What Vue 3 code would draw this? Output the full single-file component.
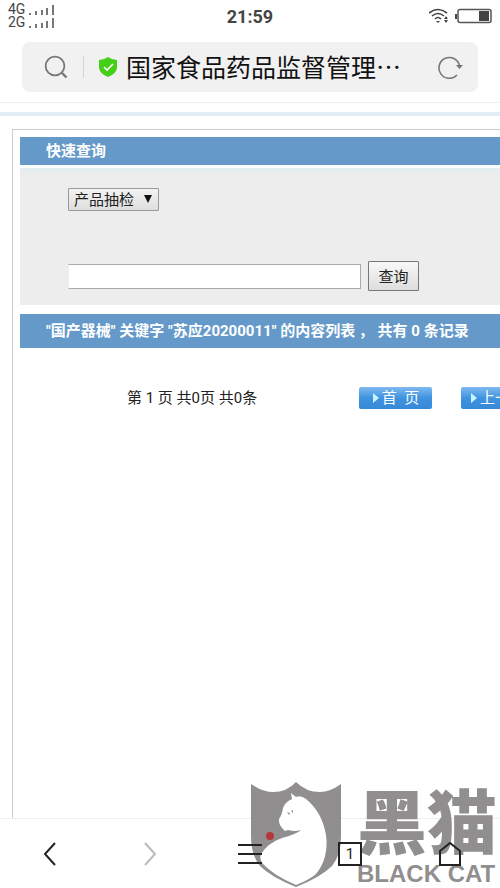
<template>
  <div class="screen">
    <header class="status-bar">
      <div class="signals">
        <div v-for="net in networks" :key="net" class="signal">
          <span>{{ net }}</span>
          <svg width="26" height="12" viewBox="0 0 26 12">
            <path d="M2 9v2M8 7v4M14 6v5M19 4v7M25 1v10" stroke="#555" stroke-width="1.6" />
          </svg>
        </div>
      </div>
      <time class="clock">21:59</time>
      <div class="device">
        <svg width="20" height="16" viewBox="0 0 20 16" fill="none" stroke="#444" stroke-width="1.6">
          <path d="M0 5Q9-2 18 5M3 8Q9 3 15 8M6 11Q9 8 12 11" />
          <path d="M7 13h4l-2 2zM15 11l2-3 2 3zM15 12l2 3 2-3z" fill="#444" stroke="none" />
        </svg>
        <svg width="37" height="16" viewBox="0 0 37 16">
          <path d="M1 6v5" stroke="#444" stroke-width="2" />
          <rect x="3" y="1.5" width="33" height="13" rx="2" fill="#fff" stroke="#555" stroke-width="1.5" />
          <rect x="24" y="3" width="10" height="10" fill="#444" />
        </svg>
      </div>
    </header>

    <div class="address-bar">
      <svg class="search-icon" width="24" height="24" viewBox="0 0 24 24" fill="none" stroke="#777" stroke-width="1.8">
        <circle cx="11" cy="11" r="9.4" />
        <path d="M17.5 17.5l5 5" stroke-width="2.4" />
      </svg>
      <span class="divider"></span>
      <svg class="shield-icon" width="20" height="22" viewBox="0 0 20 22">
        <path d="M10 1Q14 4 19 4V12Q18 18 10 21Q2 18 1 12V4Q6 4 10 1Z" fill="#45cf17" />
        <path d="M6 11l3 3 6-6" fill="none" stroke="#fff" stroke-width="1.6" />
      </svg>
      <span class="site-title">国家食品药品监督管理…</span>
      <button class="icon-button" aria-label="刷新">
        <svg width="26" height="24" viewBox="0 0 26 24" fill="none" stroke="#777" stroke-width="1.6">
          <path d="M20 20A10.4 10.4 0 1 1 22.6 11" />
          <path d="M19 10h7l-3.500 4z" fill="#777" stroke="none" />
        </svg>
      </button>
    </div>
    <div class="band"></div>

    <main class="page">
      <h2 class="bar">快速查询</h2>
      <form class="query" @submit.prevent>
        <label class="select-wrap">
          <select v-model="category" aria-label="查询类别">
            <option>产品抽检</option>
          </select>
          <span class="arrow"></span>
        </label>
        <div class="query-row">
          <input v-model="keyword" type="text" aria-label="关键字" />
          <button type="submit" class="query-button">查询</button>
        </div>
      </form>
      <h2 class="bar result-bar">"国产器械" 关键字 "苏应20200011" 的内容列表 ， 共有 0 条记录</h2>
      <nav class="pager">
        <span class="summary">第 1 页 共0页 共0条</span>
        <button v-for="name in pagerButtons" :key="name" class="pager-button">
          <svg width="8" height="10" viewBox="0 0 8 10"><path d="M1 0l6 5-6 5z" fill="#c8f4ff" /></svg>
          <span>{{ name }}</span>
        </button>
      </nav>
    </main>

    <footer class="toolbar">
      <div class="watermark">
        <svg width="90" height="107" viewBox="0 0 90 107">
          <path d="M0 3Q12 11 22 11Q36 11 45 1Q55 11 69 11Q79 11 90 3V55Q90 74 81 85Q70 96 45 106Q20 96 9 85Q0 74 0 55Z" fill="#918e8f" />
          <path d="M40 12L45 16Q50 14 55 18Q71 31 75 54Q78 77 65 93Q58 99 45 104Q22 94 12 83Q8 78 10 73Q17 62 31 57Q46 53 50 49Q44 51 37 49L34 50Q27 44 28 38Q31 34 32 27Q34 21 41 18Z" fill="#fff" />
          <path d="M36 31l3 1-1 2zM40 30l2-1v3z" fill="#918e8f" />
          <circle cx="19" cy="55" r="4" fill="#b5373b" />
        </svg>
        <div class="brand">
          <span class="brand-cn">黑猫</span>
          <span class="brand-en">BLACK CAT</span>
        </div>
      </div>
      <button class="tool" aria-label="后退">
        <svg width="24" height="24" viewBox="0 0 24 24" fill="none" stroke="#222" stroke-width="2"><path d="M17 1L7 12l10 11" /></svg>
      </button>
      <button class="tool" aria-label="前进">
        <svg width="24" height="24" viewBox="0 0 24 24" fill="none" stroke="#bbb" stroke-width="2"><path d="M7 1l10 11L7 23" /></svg>
      </button>
      <button class="tool" aria-label="菜单">
        <svg width="24" height="24" viewBox="0 0 24 24" stroke="#222" stroke-width="2"><path d="M0 3h24M0 12h24M0 21h24" /></svg>
      </button>
      <button class="tool" aria-label="标签页">
        <span class="tabs">1</span>
      </button>
      <button class="tool" aria-label="主页">
        <svg width="24" height="24" viewBox="0 0 24 24" fill="none" stroke="#222" stroke-width="2"><path d="M2 9L12 1l10 8v14H2z" /></svg>
      </button>
    </footer>
  </div>
</template>

<script setup>
import { ref } from 'vue';

const networks = ['4G', '2G'];
const pagerButtons = ['首  页', '上一页'];
const category = ref('产品抽检');
const keyword = ref('');
</script>

<style>
body {
  margin: 0;
  background: #fff;
}
</style>

<style scoped>
.screen {
  display: flex;
  flex-direction: column;
  min-height: 100vh;
  overflow: hidden;
  font-family: Roboto, "Noto Sans CJK SC", sans-serif;
  font-size: 15px;
  color: #222;
}

button {
  padding: 0;
  border: none;
  background: none;
  font: inherit;
  color: inherit;
}

svg {
  flex: none;
  display: block;
}

/* ステータスバー */
.status-bar {
  display: grid;
  grid-template-columns: 1fr auto 1fr;
  align-items: center;
  height: 32px;
  padding: 0 8px;
}

.signal {
  display: flex;
  align-items: center;
  gap: 3px;
  font-size: 14px;
  line-height: 13px;
  color: #444;
}

.clock {
  font-size: 18px;
  font-weight: 700;
  color: #444;
}

.device {
  display: flex;
  justify-content: flex-end;
  align-items: center;
  gap: 6px;
}

.address-bar {
  display: flex;
  align-items: center;
  height: 50px;
  margin: 10px 22px;
  padding: 0 15px 0 22px;
  border-radius: 8px;
  background: #f1f1f1;
}

.divider {
  width: 1px;
  height: 22px;
  margin: 0 14px 0 15px;
  background: #d4d4d4;
}

.site-title {
  flex: 1;
  padding: 0 0 2px 8px;
  font-size: 25px;
  line-height: 36px;
  white-space: nowrap;
  font-family: "Noto Sans CJK SC", sans-serif;
  color: #111;
}

.band {
  height: 4px;
  padding-top: 9px;
  border-top: 1px solid #eee;
  background: #e1eef6 content-box;
}

.page {
  flex: 1;
  margin: 13px 0 0 12px;
  padding: 7px 0 0 7px;
  border-top: 1px solid #ccc;
  border-left: 1px solid #ccc;
}

.bar {
  margin: 0;
  padding-left: 26px;
  background: #6499ca;
  color: #fff;
  font-size: 15px;
  font-weight: 700;
  line-height: 28px;
  white-space: nowrap;
}

.query {
  margin: 3px 0 9px;
  padding: 16px 0 14px 48px;
  border-top: 4px solid #e4edf1;
  background: #ededed;
}

.select-wrap {
  position: relative;
  display: block;
  width: 91px;
}

select {
  display: block;
  width: 100%;
  height: 23px;
  padding: 1px 5px 0;
  border: 1px solid #999;
  border-radius: 1px;
  background: linear-gradient(#f3f3f3, #dedede);
  appearance: none;
  font: inherit;
  color: #222;
}

.arrow {
  position: absolute;
  top: 7px;
  right: 7px;
  border: 4px solid transparent;
  border-top: 8px solid #111;
  border-bottom: none;
}

.query-row {
  display: flex;
  align-items: center;
  gap: 7px;
  margin-top: 50px;
}

input {
  box-sizing: border-box;
  width: 293px;
  height: 25px;
  border: 1px solid #aaa;
  border-left-color: #eee;
  background: #fff;
  font: inherit;
}

.query-button {
  width: 51px;
  height: 30px;
  padding-bottom: 2px;
  border: 1px solid #777;
  border-radius: 1px;
  background: linear-gradient(#f8f8f8, #ddd);
}

.result-bar {
  line-height: 34px;
}

.pager {
  display: flex;
  align-items: center;
  margin-top: 39px;
  padding-left: 107px;
  line-height: 20px;
  white-space: nowrap;
}

.summary {
  flex: none;
  width: 232px;
}

.pager-button {
  display: flex;
  flex: none;
  align-items: center;
  justify-content: center;
  gap: 2px;
  width: 73px;
  height: 22px;
  margin-right: 29px;
  border-radius: 2px;
  background: linear-gradient(#80baf0, #3f93df 50%, #3889d9);
  color: #fff;
  white-space: pre;
}

.toolbar {
  position: relative;
  display: flex;
  align-items: center;
  height: 69px;
  border-top: 1px solid #eee;
}

.tool {
  position: relative;
  display: flex;
  flex: 1;
  justify-content: center;
}

.tabs {
  box-sizing: border-box;
  width: 24px;
  height: 24px;
  border: 2px solid #222;
  line-height: 20px;
}

/* 右下に重なるロゴ */
.watermark {
  position: absolute;
  right: 3px;
  bottom: 0;
  display: flex;
  gap: 16px;
  color: #918e8f;
}

.brand {
  display: flex;
  flex-direction: column;
  justify-content: flex-end;
  gap: 8px;
  white-space: nowrap;
}

.brand-cn {
  font-family: "Noto Sans CJK SC", sans-serif;
  font-size: 70px;
  font-weight: 900;
  line-height: 66px;
}

.brand-en {
  font-family: "Liberation Sans", Arial, sans-serif;
  font-size: 24px;
  font-weight: 700;
  line-height: 28px;
}
</style>
